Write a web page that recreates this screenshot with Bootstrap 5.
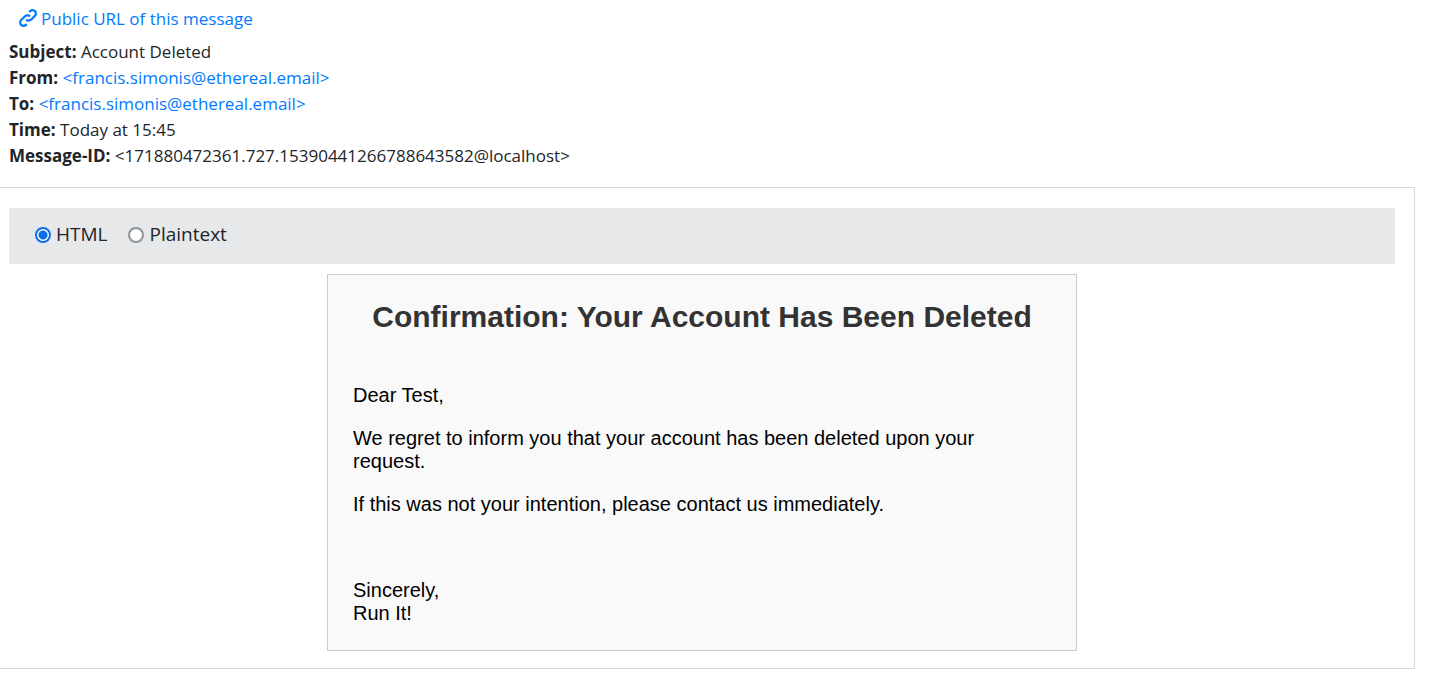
<!DOCTYPE html>
<html lang="en">
<head>
<meta charset="utf-8">
<meta name="viewport" content="width=device-width, initial-scale=1">
<title>Account Deleted</title>
<link rel="stylesheet" href="https://cdn.jsdelivr.net/npm/bootstrap@5.3.0/dist/css/bootstrap.min.css">
<style>
body { font-family: "Segoe UI", "Open Sans", sans-serif; font-size: 17px; line-height: 26px; color: #212529; background: #fff; }
a { color: #007bff; text-decoration: none; }
a:hover { text-decoration: underline; }
.message-head { padding: 6px 9px 18px; }
.public-link { padding: 0 10px; margin-bottom: 7px; gap: 4px; }
.link-icon { width: 18px; height: 18px; margin-bottom: 3px; fill: #007bff; }
.message-body { margin-right: 26px; padding: 20px 19px 17px 9px; border: 1px solid #d9d7e4; border-left: 0; }
.format-bar { background: #e6e8ea; padding: 13px 26px 17px; gap: 21px; font-size: 19px; }
.format-bar label { gap: 5px; }
.format-bar input { appearance: none; width: 16px; height: 16px; margin: 2px 0 0; border: 2px solid #8f9499; border-radius: 50%; background: #fff; }
.format-bar input:checked { border-color: #0a6fe8; background: radial-gradient(circle, #0a6fe8 4px, #fff 5px); }
.mail { max-width: 750px; margin-top: 10px; padding: 25px; background: #f9f9f9; border: 1px solid #ccc; color: #000; font: 20px/23px Arial, "Liberation Sans", sans-serif; }
.mail h1 { font-size: 30px; line-height: 34px; font-weight: 700; color: #333; margin-bottom: 50px; }
.mail p { margin-bottom: 20px; }
.mail .sign-off { margin-top: 63px; margin-bottom: 0; }
</style>
</head>
<body>
<header class="message-head">
  <div class="public-link d-flex align-items-center">
    <svg class="link-icon" viewBox="0 0 8 8" aria-hidden="true"><path d="M5.88.03c-.18.01-.36.03-.53.09-.27.1-.53.25-.75.47a.5.5 0 1 0 .69.69c.11-.11.24-.17.38-.22.35-.12.78-.07 1.06.22.39.39.39 1.04 0 1.44l-1.5 1.5c-.44.44-.8.48-1.06.47-.26-.01-.41-.13-.41-.13a.5.5 0 1 0-.5.88s.34.22.84.25c.5.03 1.2-.16 1.81-.78l1.5-1.5c.78-.78.78-2.04 0-2.81-.28-.28-.61-.45-.97-.53-.18-.04-.38-.04-.56-.03zm-2 2.31c-.5-.02-1.19.15-1.78.75l-1.5 1.5c-.78.78-.78 2.04 0 2.81.56.56 1.36.72 2.06.47.27-.1.53-.25.75-.47a.5.5 0 1 0-.69-.69c-.11.11-.24.17-.38.22-.35.12-.78.07-1.06-.22-.39-.39-.39-1.04 0-1.44l1.5-1.5c.4-.4.75-.45 1.03-.44.28.01.47.09.47.09a.5.5 0 1 0 .44-.88s-.34-.2-.84-.22z"/></svg>
    <a href="#">Public URL of this message</a>
  </div>
  <div><strong>Subject:</strong> Account Deleted</div>
  <div><strong>From:</strong> <a href="#">&lt;francis.simonis@ethereal.email&gt;</a></div>
  <div><strong>To:</strong> <a href="#">&lt;francis.simonis@ethereal.email&gt;</a></div>
  <div><strong>Time:</strong> Today at 15:45</div>
  <div><strong>Message-ID:</strong> &lt;171880472361.727.15390441266788643582@localhost&gt;</div>
</header>
<main class="message-body">
  <div class="format-bar d-flex flex-wrap">
    <label class="d-flex align-items-center" for="as-html"><input type="radio" name="format" id="as-html" checked>HTML</label>
    <label class="d-flex align-items-center" for="as-text"><input type="radio" name="format" id="as-text">Plaintext</label>
  </div>
  <article class="mail mx-auto">
    <h1 class="text-center">Confirmation: Your Account Has Been Deleted</h1>
    <p>Dear Test,</p>
    <p>We regret to inform you that your account has been deleted upon your request.</p>
    <p>If this was not your intention, please contact us immediately.</p>
    <p class="sign-off">Sincerely,<br>Run It!</p>
  </article>
</main>
<script src="https://cdn.jsdelivr.net/npm/bootstrap@5.3.0/dist/js/bootstrap.bundle.min.js"></script>
</body>
</html>
